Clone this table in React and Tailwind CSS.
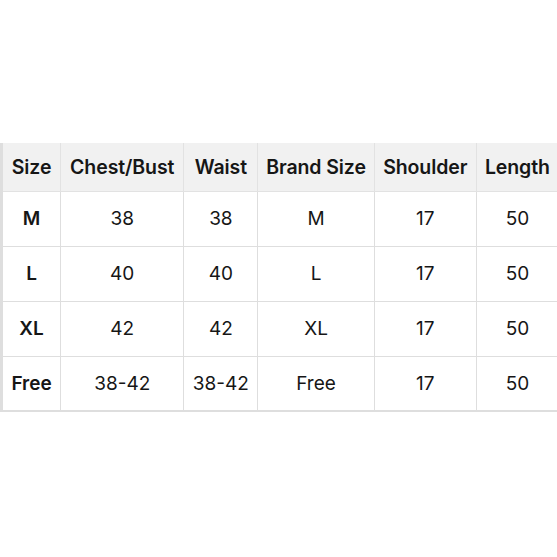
const header = ["Size", "Chest/Bust", "Waist", "Brand Size", "Shoulder", "Length"];

const rows = [
  ["M", "38", "38", "M", "17", "50"],
  ["L", "40", "40", "L", "17", "50"],
  ["XL", "42", "42", "XL", "17", "50"],
  ["Free", "38-42", "38-42", "Free", "17", "50"],
];

const widths = ["w-[59px]", "w-[123px]", "w-[74px]", "w-[116px]", "w-[102px]", "w-[82px]"];

export default function App() {
  return (
    <div className="w-[557px] h-[557px] overflow-hidden bg-white pt-[143px] font-['Inter',sans-serif] text-[#161616]">
      <table className="table-fixed border-collapse w-[559px] border-l-[3px] border-b-2 border-[#dedede]">
        <thead>
          <tr className="h-[48px] bg-[#f1f1f1]">
            {header.map((h, i) => (
              <th
                key={h}
                className={`${widths[i]} border-r border-b border-[#e2e2e2] px-0 pt-[2px] text-center text-[19.5px] font-semibold tracking-[-0.1px] leading-none whitespace-nowrap`}
              >
                {h}
              </th>
            ))}
          </tr>
        </thead>
        <tbody>
          {rows.map((row, r) => (
            <tr key={r} className="h-[55px]">
              {row.map((cell, i) => (
                <td
                  key={i}
                  className={`border-r border-b border-[#dedede] text-center text-[19px] leading-none ${
                    i === 0 ? "font-semibold" : "font-normal"
                  }`}
                >
                  {cell}
                </td>
              ))}
            </tr>
          ))}
        </tbody>
      </table>
    </div>
  );
}
